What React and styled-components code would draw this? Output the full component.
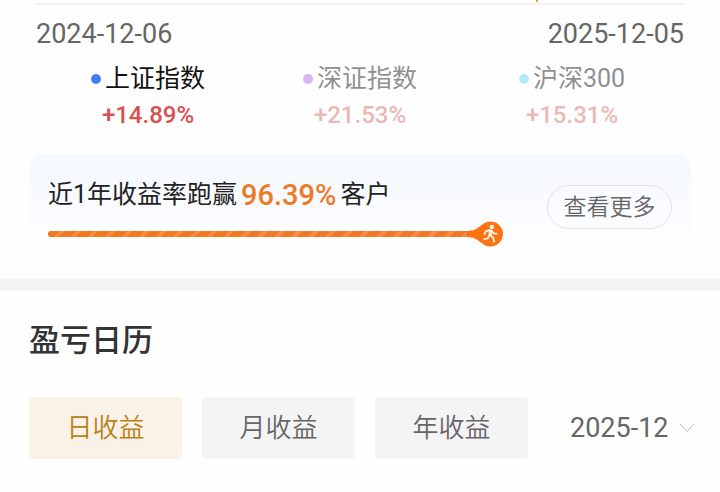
import React, { useState } from "react";
import styled, { createGlobalStyle } from "styled-components";

const indexes = [
    { name: "上证指数", change: "+14.89%", color: "#4380f8" },
    { name: "深证指数", change: "+21.53%", color: "#b26ef0" },
    { name: "沪深300", change: "+15.31%", color: "#6bdcf5" },
];

const periods = ["日收益", "月收益", "年收益"];

const beaten = 96.39;

const RunnerHead = () => (
    <Head viewBox="0 0 36 26" aria-hidden="true">
        <path d="M0 10C8 10 10 7 14.8 4A12.5 12.5 0 1 1 14.8 22C10 19 8 16 0 16Z" fill="#fb7313" />
        <circle cx="24.8" cy="6" r="2.2" fill="#fff6ea" />
        <path
            d="M22.6 9.2L18.8 10.4L17.4 13.2M22.2 14.6L20.6 17.6L17.2 17.8M23.6 14.4L26.4 17.2L27 20.6M25.2 10.4L26.6 12.4L29.6 12.6"
            fill="none"
            stroke="#fff6ea"
            strokeWidth="1.8"
            strokeLinecap="round"
            strokeLinejoin="round"
        />
        <path d="M22 8.4L25.4 9L24.8 15.2L21.4 15Z" fill="#fff6ea" />
    </Head>
);

const App = () => {
    const [active, setActive] = useState(0);
    const [period, setPeriod] = useState(0);

    return (
        <Page>
            <GlobalStyle />
            <Axis>
                <Marker />
            </Axis>
            <Dates>
                <span>2024-12-06</span>
                <span>2025-12-05</span>
            </Dates>
            <Indexes>
                {indexes.map((item, i) => (
                    <IndexButton key={item.name} $on={i === active} onClick={() => setActive(i)}>
                        <IndexName>
                            <Dot $color={item.color} />
                            {item.name}
                        </IndexName>
                        <Change $on={i === active}>{item.change}</Change>
                    </IndexButton>
                ))}
            </Indexes>
            <Card>
                <Rank>
                    <RankText>
                        近1年收益率跑赢<Percent>{beaten}%</Percent>客户
                    </RankText>
                    <Progress style={{ width: `${beaten}%` }}>
                        <Bar />
                        <RunnerHead />
                    </Progress>
                </Rank>
                <MoreButton>查看更多</MoreButton>
            </Card>
            <Divider />
            <Calendar>
                <Title>盈亏日历</Title>
                <Controls>
                    <Tabs>
                        {periods.map((name, i) => (
                            <Tab key={name} $on={i === period} onClick={() => setPeriod(i)}>
                                {name}
                            </Tab>
                        ))}
                    </Tabs>
                    <Month>
                        <MonthSelect aria-label="月份" defaultValue="2025-12">
                            <option>2025-12</option>
                        </MonthSelect>
                        <Chevron viewBox="0 0 16 10" aria-hidden="true">
                            <path d="M1 1L8 8.5L15 1" fill="none" stroke="#bbb" />
                        </Chevron>
                    </Month>
                </Controls>
            </Calendar>
        </Page>
    );
};

export default App;

const GlobalStyle = createGlobalStyle`
* {
box-sizing: border-box;
}
body {
margin: 0;
background-color: #fefefe;
font-family: Roboto, "Noto Sans CJK SC", sans-serif;
}
button, select {
font-family: inherit;
border: none;
padding: 0;
background: none;
cursor: pointer;
}
`;

const Page = styled.main`
width: 100%;
`;
const Axis = styled.div`
margin: 0 36px;
padding-left: 69%;
height: 5px;
border-bottom: 2px solid #f3f3f3;
`;
const Marker = styled.div`
margin-left: 3px;
width: 2px;
height: 2px;
background-color: #f0a050;
`;
const Dates = styled.div`
display: flex;
justify-content: space-between;
margin: 0 36px;
padding-top: 13px;
color: #666;
font-size: 27px;
line-height: 32px;
`;
const Indexes = styled.div`
display: grid;
grid-template-columns: repeat(3, 1fr);
padding: 13px 42px 0;
`;
const IndexButton = styled.button`
display: flex;
flex-direction: column;
align-items: center;
gap: 6px;
color: ${(p) => (p.$on ? "#111" : "#222")};
opacity: ${(p) => (p.$on ? 1 : 0.5)};
`;
const IndexName = styled.span`
display: flex;
align-items: center;
gap: 4px;
font-size: 25px;
line-height: 32px;
`;
const Dot = styled.span`
width: 10px;
height: 10px;
border-radius: 50%;
background-color: ${(p) => p.$color};
`;
const Change = styled.span`
color: ${(p) => (p.$on ? "#d9504f" : "#dd7371")};
font-size: 24px;
font-weight: 500;
line-height: 28px;
`;
const Card = styled.section`
display: flex;
align-items: center;
gap: 27px;
margin: 26px 29px 0;
padding: 0 19px;
height: 104px;
border-radius: 12px;
background: linear-gradient(#f4f8ff, #fefefe);
`;
const Rank = styled.div`
flex: 1;
padding-top: 12px;
`;
const RankText = styled.p`
display: flex;
align-items: center;
margin: 0;
color: #222;
font-size: 25px;
line-height: 32px;
white-space: nowrap;
`;
const Percent = styled.strong`
margin: 0 4px;
color: #ed7a25;
font-size: 29px;
font-weight: 500;
`;
const Progress = styled.div`
display: flex;
align-items: center;
margin-top: 10px;
`;
const Bar = styled.div`
flex: 1;
height: 6px;
border-radius: 3px 0 0 3px;
background: repeating-linear-gradient(135deg, #f4771f 0 8px, #f58c45 8px 12px);
`;
const Head = styled.svg`
width: 36px;
height: 26px;
`;
const MoreButton = styled.button`
&& {
padding-bottom: 4px;
border: 1px solid #e2e2e2;
}
width: 125px;
height: 44px;
border-radius: 22px;
color: #666;
font-size: 23px;
font-weight: 350;
`;
const Divider = styled.div`
margin-top: 20px;
height: 12px;
background-color: #f4f4f4;
`;
const Calendar = styled.section`
padding: 30px 25px 32px 29px;
`;
const Title = styled.h2`
margin: 0;
color: #333;
font-size: 31px;
font-weight: 500;
line-height: 40px;
`;
const Controls = styled.div`
display: flex;
align-items: center;
gap: 42px;
margin-top: 36px;
`;
const Tabs = styled.div`
flex: 1;
display: grid;
grid-template-columns: repeat(3, 1fr);
gap: 20px;
`;
const Tab = styled.button`
&& {
padding-bottom: 5px;
background-color: ${(p) => (p.$on ? "#fbf2e7" : "#f4f4f4")};
}
height: 62px;
border-radius: 4px;
color: ${(p) => (p.$on ? "#b8811c" : "#666")};
font-size: 26px;
font-weight: 350;
`;
const Month = styled.div`
display: flex;
align-items: center;
gap: 10px;
`;
const MonthSelect = styled.select`
appearance: none;
color: #666;
font-size: 27px;
line-height: 32px;
`;
const Chevron = styled.svg`
width: 16px;
height: 10px;
`;
